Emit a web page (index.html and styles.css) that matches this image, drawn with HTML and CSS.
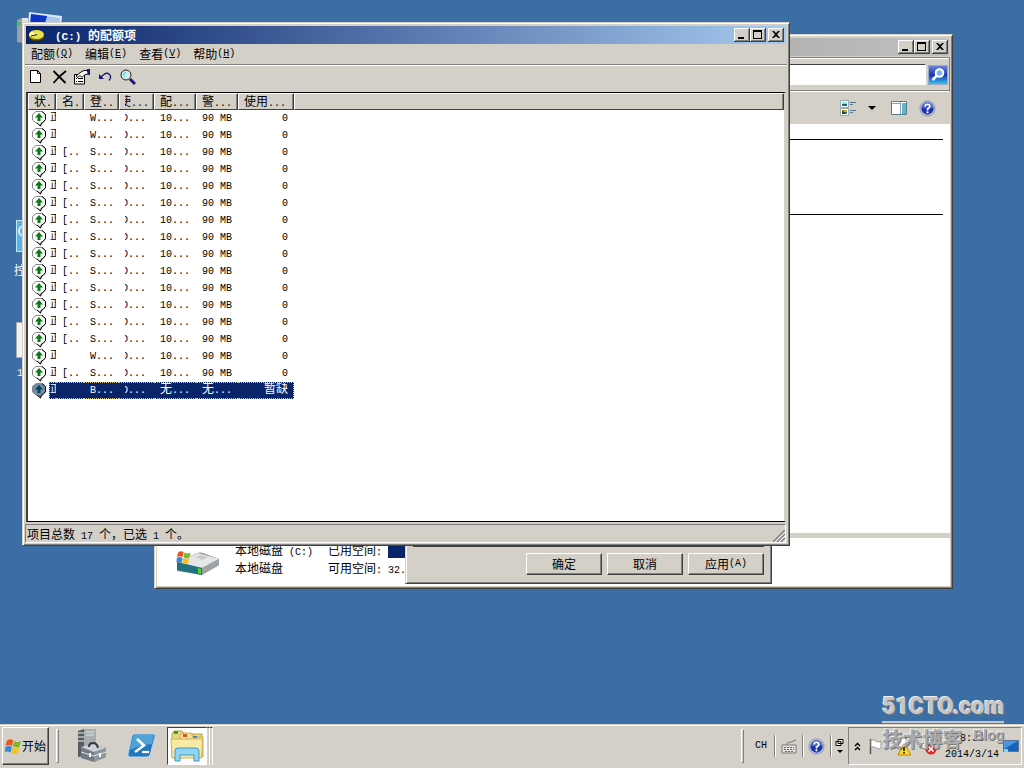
FILE: index.html
```
<!DOCTYPE html>
<html lang="zh-CN">
<head>
<meta charset="utf-8">
<title>(C:) 的配额项</title>
<link rel="stylesheet" href="styles.css">
</head>
<body>
<svg class="defs" aria-hidden="true">
  <symbol id="bubble" viewBox="0 0 16 17">
    <path d="M5 1.500H11L14.500 4.500V9.500L12 12.500L10.500 13L9.500 16L6 13H5L1.500 10V4.500Z" fill="var(--bubble, #fff)" stroke="#888"/>
    <path d="M11 1.500L14.500 4.500V9.500L12 12.500L10.500 13L9.500 16L6 13" fill="none" stroke="#000"/>
    <path d="M8 3L12 7.500H9.500V11H6.500V7.500H4Z" fill="var(--arrow, #0a7a14)"/>
  </symbol>
  <symbol id="min" viewBox="0 0 16 14"><path d="M4 9h6v2H4z"/></symbol>
  <symbol id="max" viewBox="0 0 16 14"><path d="M3 2h9v9H3zM4 4v6h7V4z" fill-rule="evenodd"/></symbol>
  <symbol id="close" viewBox="0 0 16 14"><path d="M4 3h2l2 2 2-2h2L9 6.500 12 10h-2L8 8l-2 2H4l3-3.500z"/></symbol>
  <symbol id="flag" viewBox="0 0 18 18">
    <path d="M2 3Q5 0 8.500 2.500L7.500 8.500Q4 6.500 .5 8.500Z" fill="#e8541c"/>
    <path d="M9.500 3Q13 5.500 17 3L15.500 9Q12 11 8.500 8.700Z" fill="#7cb82f"/>
    <path d="M.3 9.500Q4 7.500 7.300 9.500L6 15.500Q3 13.500 0 15Z" fill="#3587d8"/>
    <path d="M8.300 10Q12 12 15.300 10L13.700 16Q10 18 6.900 16Z" fill="#f7c21a"/>
  </symbol>
  <symbol id="help" viewBox="0 0 18 18">
    <circle cx="9" cy="9" r="8" fill="#c4cae0" stroke="#8790b0"/>
    <circle cx="9" cy="9" r="6.500" fill="#1d35a8"/>
    <path d="M3 8a6 6 0 0 1 12 0Q9 10 3 8Z" fill="#6d8bdc" opacity=".6"/>
    <path d="M6.500 7Q6.500 4.500 9 4.500T11.500 7Q11.500 8 9 9.800V11" fill="none" stroke="#fff" stroke-width="1.800"/>
    <circle cx="9" cy="13" r="1.200" fill="#fff"/>
  </symbol>
</svg>

<main class="desktop">
  <div class="shortcut computer">
    <svg width="48" height="34" viewBox="0 0 48 34"><path d="M1 8l5-2v25l-5-1z" fill="#9aa0a6"/><path d="M6 6h6v26H6z" fill="#e1e3e5"/><path d="M2 10h2v3H2z" fill="#2fbf3a"/><path d="M13 0l33 4-2 22H11z" fill="#dfe9f6"/><path d="M15 2l29 4-2 20H13z" fill="#a9c6ee"/><path d="M15 2l16 2-6 22H13z" fill="#0a35c8"/></svg>
  </div>
  <div class="shortcut panel">
    <svg width="34" height="32" viewBox="0 0 34 32"><rect x="2.500" y=".5" width="31" height="31" fill="#56b4e8" stroke="#bfe6fa"/><circle cx="10" cy="11" r="5" fill="none" stroke="#d8f2ff" stroke-width="2"/></svg>
    <span>控</span>
  </div>
  <div class="shortcut file">
    <svg width="30" height="36" viewBox="0 0 30 36"><path d="M.5.500h29v35H.5z" fill="#f2f2f2" stroke="#aaa"/></svg>
    <span class="en">1</span>
  </div>

  <section class="window explorer" aria-label="计算机">
    <header class="titlebar inactive">
      <div class="controls">
        <button aria-label="最小化"><svg><use href="#min"/></svg></button><button aria-label="最大化"><svg><use href="#max"/></svg></button><button class="x" aria-label="关闭"><svg><use href="#close"/></svg></button>
      </div>
    </header>
    <div class="address">
      <input type="text" aria-label="搜索">
      <button class="search" aria-label="搜索"><svg width="18" height="18" viewBox="0 0 18 18"><circle cx="10.500" cy="7" r="3.800" fill="#7fb2f0" stroke="#fff" stroke-width="2"/><path d="M8 9.500L3.500 14" stroke="#fff" stroke-width="2.500"/></svg></button>
    </div>
    <div class="commands">
      <button aria-label="视图"><svg width="17" height="17" viewBox="0 0 17 17"><path d="M.5.500h8v7h-8zM.5 8.500h8v7h-8z" fill="#fff" stroke="#9aa9ad"/><path d="M2 2h5v2H2z" fill="#9edbe8"/><path d="M2 4h5v2H2z" fill="#216778"/><path d="M2 10h2v2H2zM5 12h2v2H5z" fill="#5a7a20"/><path d="M4 10h3v2H4z" fill="#d8a925"/><path d="M2 12h3v2H2z" fill="#1d3c66"/><path d="M10 2.500h6M10 4.500h3M10 10.500h6M10 12.500h3" stroke="#5c7590"/></svg></button>
      <button class="drop" aria-label="更多选项"><svg width="8" height="4" viewBox="0 0 8 4"><path d="M0 0h8L4 4z"/></svg></button>
      <button class="preview" aria-label="预览窗格"><svg width="16" height="15" viewBox="0 0 16 15"><path d="M.5.500h15v13H.5z" fill="#fff" stroke="#527f91"/><path d="M1 2.500h9M9.500 1v12" stroke="#8aa5b2"/><path d="M11 2h4v11h-4z" fill="#67b4ca"/></svg></button>
      <button aria-label="帮助"><svg width="17" height="17"><use href="#help"/></svg></button>
    </div>
    <div class="files"><hr><hr></div>
    <footer class="details">
      <svg class="drive" width="46" height="28" viewBox="0 0 46 28">
        <path d="M2 12L22 3Q25 2 28 3L44 9V15L27 25L2 21Z" fill="#8c9194"/>
        <path d="M2 12L23 3L44 9L27 18Z" fill="#e5e6e7"/><path d="M2 12L27 18V25L2 20Z" fill="#21727c"/><path d="M27 18L44 9V15L27 25Z" fill="#9fa3a6"/>
        <path d="M23 18l3 1v5l-3-1z" fill="#56d336"/><path d="M20 7l6-2 7 2-6 3z" fill="#c8cacc"/>
        <svg x="1" y="0" width="16" height="15"><use href="#flag"/></svg>
      </svg>
      <dl>
        <dt>本地磁盘<span class="en"> (C:)</span></dt><dd>已用空间<span class="en">: </span><i class="meter"></i></dd>
        <dt>本地磁盘</dt><dd>可用空间<span class="en">: 32.</span></dd>
      </dl>
    </footer>
  </section>

  <section class="window dialog" aria-label="属性">
    <div class="page-edge"></div>
    <div class="actions"><button>确定</button><button>取消</button><button>应用<span class="en">(A)</span></button></div>
  </section>

  <section class="window quota">
    <header class="titlebar">
      <svg class="app" width="17" height="13" viewBox="0 0 17 13"><ellipse cx="8.500" cy="7.500" rx="8" ry="4.500" fill="#6b6412" stroke="#28250a"/><ellipse cx="8.500" cy="5.500" rx="7.500" ry="4.500" fill="#e7df45"/><path d="M8 5.500L1 7Q1 4 4 2.500Z" fill="#fffbb0"/><path d="M9 5.500L3 7" stroke="#28250a"/></svg>
      <h1><span class="en">(C:) </span>的配额项</h1>
      <div class="controls">
        <button aria-label="最小化"><svg><use href="#min"/></svg></button><button aria-label="最大化"><svg><use href="#max"/></svg></button><button class="x" aria-label="关闭"><svg><use href="#close"/></svg></button>
      </div>
    </header>
    <nav class="menubar">
      <button>配额<span class="en">(<u>Q</u>)</span></button><button>编辑<span class="en">(<u>E</u>)</span></button><button>查看<span class="en">(<u>V</u>)</span></button><button>帮助<span class="en">(<u>H</u>)</span></button>
    </nav>
    <div class="toolbar">
      <button aria-label="新建配额项"><svg viewBox="0 0 16 16"><path d="M2.500 1.500h7l3 3v9h-10z" fill="#fff" stroke="#000"/><path d="M9.500 1.500v3h3" fill="none" stroke="#000"/></svg></button>
      <button aria-label="删除"><svg viewBox="0 0 16 16"><path d="M2.500 2L14.500 14M15 2L8.500 7.500L2.500 14" fill="none" stroke="#000" stroke-width="1.800"/></svg></button>
      <button aria-label="属性"><svg viewBox="0 0 16 16"><path d="M.5 5.500h10v9.500H.5z" fill="#fff" stroke="#000"/><path d="M2 9.500h1M4 9.500h5M2 12.500h1M4 12.500h5" stroke="#000"/><path d="M2 7l5-4 3-1.500h4V5l-3 .500-3 3-2-2-2 2z" fill="#fff" stroke="#000"/><path d="M13 0h3v6h-2V3h-1z" fill="#18187c"/></svg></button>
      <button aria-label="撤消"><svg viewBox="0 0 16 16"><path d="M2 5v5h5z" fill="#18187c"/><path d="M4 8L7 5.500Q10 3 12.500 5.500T12 11.500" fill="none" stroke="#18187c" stroke-width="1.300"/></svg></button>
      <button aria-label="查找"><svg viewBox="0 0 16 16"><circle cx="6" cy="6" r="5" fill="#d8ebeb" stroke="#222"/><path d="M3 6l3-3M4 8l1-1" stroke="#50dce0" stroke-width="1.500"/><path d="M10 10l5 5" stroke="#18187c" stroke-width="3"/></svg></button>
    </div>
    <div class="list">
      <table>
        <colgroup><col class="c28"><col class="c28"><col class="c35"><col class="c35"><col class="c42"><col class="c42"><col class="c56"><col></colgroup>
        <thead><tr><th>状<span class="en">.</span></th><th>名<span class="en">.</span></th><th>登<span class="en">..</span></th><th><div class="cut">使<span class="en">...</span></div></th><th>配<span class="en">...</span></th><th>警<span class="en">...</span></th><th class="num">使用<span class="en">...</span></th><th></th></tr></thead>
        <tbody id="rows"></tbody>
      </table>
    </div>
    <footer class="status"><span>项目总数<b class="en"> 17 </b>个，已选<b class="en"> 1 </b>个。</span>
      <svg width="12" height="12" viewBox="0 0 12 12"><path d="M0 12L12 0M4 12L12 4M8 12L12 8" stroke="#808080" stroke-width="1.500"/><path d="M2 12L12 2M6 12L12 6M10 12L12 10" stroke="#fff"/></svg>
    </footer>
  </section>
</main>

<footer class="taskbar">
  <button class="start"><svg width="17" height="17"><use href="#flag"/></svg>开始</button>
  <i class="grip"></i>
  <button class="launch" aria-label="服务器管理器"><svg width="30" height="34" viewBox="0 0 30 34">
    <path d="M1 2l6-2v27l-6 1z" fill="#555b60"/><path d="M7 0h12v27H7z" fill="#a7adb1"/><path d="M1 4h6M1 8h6M1 12h6" stroke="#edf0f2"/><path d="M9 3h8M9 6h8" stroke="#e2e5e7"/>
    <path d="M4 18l12-3 13 4v9l-12 5L4 29z" fill="#737c83"/><path d="M4 18l12-3 13 4-12 4z" fill="#cbd1d5"/><path d="M17 23l12-4v9l-12 5z" fill="#8e979e"/><path d="M4 23l13 4 12-4" fill="none" stroke="#dce1e5"/><path d="M12 18q0-4 4-4t5 5" fill="none" stroke="#33383c" stroke-width="2"/><path d="M12 24h2v4h-2zM22 24h2v4h-2z" fill="#fff"/></svg></button>
  <button class="launch" aria-label="PowerShell"><svg width="30" height="26" viewBox="0 0 30 26"><path d="M7 1h20q2 0 1 3l-5 18q-1 2-3 2H3q-3 0-2-3L5 3q1-2 2-2z" fill="#2378bb" stroke="#b2d6ee"/><path d="M7 2h20l-2 9Q14 12 3 17L6 4z" fill="#69b8e8" opacity=".65"/><path d="M10 6l7 6.500L8 19" fill="none" stroke="#fff" stroke-width="2.500"/><path d="M15 19h7" stroke="#fff" stroke-width="2.200"/></svg></button>
  <button class="launch active" aria-label="Windows 资源管理器"><svg width="34" height="32" viewBox="0 0 34 32"><path d="M2 4l2-3h8l2 3h18v22H2z" fill="#edd77c" stroke="#b79b3d"/><path d="M10 5l2-2h9l2 4h10v20H10z" fill="#f4e391" stroke="#c4a848"/><path d="M1 9h30q2 0 1.500 3l-1 16H2z" fill="#f7eaa5" stroke="#cbb058"/><path d="M4 1h4v3H4z" fill="#37a72e"/><path d="M13 4h4v3h-4z" fill="#d85430"/><path d="M23 6h4v2h-4z" fill="#3e86ce"/><path d="M5 31V21q0-3 3-3h18q3 0 3 3v10h-5v-6H10v6z" fill="#90d3f1" stroke="#3c98c9"/></svg></button>
  <i class="stack"></i><i class="stack"></i>
  <div class="spacer"></div>
  <i class="grip"></i>
  <button class="lang en">CH</button>
  <i class="divider"></i>
  <button class="tray" aria-label="键盘"><svg width="16" height="15" viewBox="0 0 16 15"><path d="M1 6h14v8H1z" fill="#e5e3de" stroke="#777"/><path d="M3 8.500h10M3 10.500h10M4 12.500h8" stroke="#666" stroke-dasharray="2 1"/><path d="M6 6V4l4-1 5-2" fill="none" stroke="#777"/></svg></button>
  <i class="divider"></i>
  <button class="tray" aria-label="帮助"><svg width="17" height="17"><use href="#help"/></svg></button>
  <i class="divider"></i>
  <button class="restore" aria-label="还原语言栏"><svg width="9" height="17" viewBox="0 0 9 17"><path d="M3 1.500h5v4H3zM1 3.500h5v4H1z" fill="#fff" stroke="#000"/><path d="M2 12h6l-3 3z"/></svg></button>
  <div class="notify">
    <button aria-label="显示隐藏的图标"><svg width="7" height="9" viewBox="0 0 7 9"><path d="M1 4l2.500-2.500L6 4M1 8l2.500-2.500L6 8" fill="none" stroke="#000" stroke-width="1.400"/></svg></button>
    <svg width="14" height="17" viewBox="0 0 14 17"><path d="M1.500 1v15" stroke="#555" stroke-width="1.500"/><path d="M2 2q3-1 5 1t5 0v7q-3 2-5 0t-5-1z" fill="#fff" stroke="#999"/></svg>
    <svg width="20" height="20" viewBox="0 0 20 20"><path d="M3 2h12v10H3z" fill="#fff" stroke="#777"/><path d="M13 7l7 12H7z" fill="#ffd824" stroke="#b38a00"/><path d="M13 11v4M13 16v1.500" stroke="#000" stroke-width="1.500"/></svg>
    <svg width="18" height="20" viewBox="0 0 18 20"><path d="M1 8h3l5-5v13l-5-4H1z" fill="#eee" stroke="#777"/><circle cx="12" cy="13" r="5.500" fill="#d82a24"/><path d="M9.500 10.500l5 5M14.500 10.500l-5 5" stroke="#fff" stroke-width="1.700"/></svg>
    <time class="en"><span>8:53</span><span>2014/3/14</span></time>
    <svg width="16" height="13" viewBox="0 0 16 13"><path d="M.5.500h15v11H.5z" fill="#1562b8" stroke="#54749a"/><path d="M1 1h14L1 9z" fill="#4597df"/><path d="M1 9h4v3H1z" fill="#89d2f5"/></svg>
  </div>
</footer>

<div class="watermark"><strong>51CTO.com</strong><div><span>技术博客</span><em>Blog</em></div></div>
<script src="rows.js"></script>
</body>
</html>
```
FILE: styles.css
```
* { box-sizing: border-box; }
body {
  margin: 0; height: 100vh; overflow: hidden; display: flex; flex-direction: column;
  background: #3a6ea5; color: #000;
  font: 12px/16px "Noto Sans CJK SC", sans-serif;
}
button { font: inherit; color: inherit; padding: 0; border: 0; background: none; display: flex; align-items: center; justify-content: center; }
svg { display: block; flex: none; }
.defs { position: absolute; width: 0; height: 0; }
.en { font-family: "Liberation Mono", monospace; font-size: 10px; font-weight: inherit; line-height: 10px; white-space: pre; }

.desktop { flex: 1; position: relative; min-height: 0; }
.shortcut { position: absolute; color: #fff; display: flex; flex-direction: column; gap: 10px; }
.computer { left: 16px; top: 12px; }
.panel { left: 14px; top: 220px; }
.file { left: 16px; top: 322px; gap: 11px; }
.file .en { padding-left: 1px; }

.window {
  position: absolute; display: flex; flex-direction: column; padding: 2px;
  background: #d4d0c8; border: 1px solid; border-color: #d4d0c8 #404040 #404040 #d4d0c8;
  box-shadow: inset 1px 1px #fff, inset -1px -1px #808080;
}
.explorer { left: 154px; top: 34px; right: 71px; bottom: 135px; }
.dialog { left: 405px; top: 60px; right: 252px; bottom: 140px; justify-content: flex-end; }
.quota { left: 22px; top: 22px; right: 234px; bottom: 178px; }

.titlebar { display: flex; align-items: center; height: 18px; margin: 1px; flex: none; padding: 0 2px; background: linear-gradient(90deg, #0a246a, #a6caf0); color: #fff; }
.titlebar.inactive { padding-right: 1px; background: linear-gradient(90deg, #808080, #c0c0c0); }
.titlebar h1 { margin: 0 0 0 10px; font-size: 12px; line-height: 18px; }
.titlebar h1 .en { font-size: 11px; }
.controls { margin-left: auto; display: flex; }
.controls button { width: 16px; height: 14px; color: #000; background: #d4d0c8; box-shadow: inset -1px -1px #404040, inset 1px 1px #fff, inset -2px -2px #808080; }
.controls svg { width: 16px; height: 14px; }
.controls .x { margin-left: 2px; }

.address { display: flex; align-items: center; gap: 2px; height: 35px; flex: none; padding: 0 1px; border: 1px solid; border-color: #808080 #808080 #fff; box-shadow: inset 0 1px #fff, inset 0 -1px #808080; }
.address input { flex: 1; height: 21px; border: 1px solid; border-color: #404040 #fff #fff #404040; background: #fff; }
.search { width: 20px; height: 20px; border: 1px solid #9ba9c8; background: linear-gradient(#6a83dc, #1735b0 50%, #35c4ec); }
.commands { display: flex; align-items: center; justify-content: flex-end; height: 32px; flex: none; padding-right: 14px; }
.drop { margin: 0 15px 0 11px; }
.preview { margin-right: 12px; }
.files { flex: 1; background: #fff; padding: 15px 7px 0 0; }
.files hr { margin: 0 0 74px; border: 0; height: 1px; background: #000; }
.details { display: flex; height: 53px; flex: none; border-top: 5px solid #d4d0c8; background: #fff; padding: 3px 0 0 18px; }
.drive { margin: 9px 14px 0 0; }
dl { margin: 0; display: grid; grid-template-columns: 93px auto; grid-auto-rows: 18px; line-height: 18px; }
dd { margin: 0; white-space: nowrap; }
.meter { display: inline-block; width: 100px; height: 12px; background: #0a246a; vertical-align: middle; }

.page-edge { margin: 0 5px; border-bottom: 1px solid #404040; }
.actions { display: flex; justify-content: flex-end; gap: 5px; padding: 6px 5px; }
.actions button { width: 76px; height: 22px; border: 1px solid; border-color: #fff #404040 #404040 #fff; box-shadow: inset -1px -1px #808080; }

.menubar { display: flex; gap: 12px; height: 20px; flex: none; padding: 0 6px 2px; border-bottom: 1px solid #808080; }
.toolbar { display: flex; align-items: center; gap: 7px; height: 27px; flex: none; border-top: 1px solid #fff; padding: 0 3px 4px; }
.toolbar svg { width: 16px; height: 16px; }
.list { flex: 1; overflow: hidden; background: #fff; border: 2px solid; border-width: 1px 2px; border-color: #000 #d4d0c8 #000 #404040; margin: 0 1px; }
table { width: 100%; table-layout: fixed; border-collapse: separate; border-spacing: 0; }
.c28 { width: 28px; } .c35 { width: 35px; } .c42 { width: 42px; } .c56 { width: 56px; }
th { height: 16px; padding: 0 0 0 5px; font-weight: 400; line-height: 14px; text-align: left; overflow: hidden; white-space: nowrap; background: #d4d0c8; border: 1px solid; border-color: #fff #404040 #404040 #fff; box-shadow: inset -1px 0 #808080; }
th.num { padding: 0 7px 0 0; text-align: right; }
td { height: 17px; padding: 0 0 0 6px; overflow: hidden; white-space: pre; font: 10px/16px "Liberation Mono", "Noto Sans CJK SC", monospace; }
td.num { text-align: right; padding: 0 6px 0 0; }
td:first-child { padding: 0 0 0 3px; }
.state { display: flex; gap: 2px; }
.state svg { width: 16px; height: 17px; }
.state span { width: 7px; height: 17px; padding: 0 1px; overflow: hidden; }
.cut { overflow: hidden; text-indent: -6px; }
td .cut { text-indent: -3px; }
.selected { color: #fff; --bubble: #7388b0; --arrow: #05484a; }
.selected td:not(:first-child), .selected .state span { background: #0a246a; border: 1px dotted #d8c890; border-width: 1px 0; line-height: 14px; }
.selected .state span { border-left-width: 1px; padding: 0 1px 0 0; }
.selected td.num { border-right-width: 1px; padding-right: 5px; }
.selected td:last-child { background: none; border: 0; }
td .zh { font-size: 12px; }

.status { display: flex; justify-content: space-between; align-items: center; height: 19px; flex: none; margin: 2px 1px 0 0; padding: 1px 0 0 1px; border: 1px solid; border-color: #808080 #fff #fff #808080; }
.status b { font-weight: 400; }
.status svg { align-self: flex-end; }

.taskbar { display: flex; align-items: center; height: 44px; flex: none; padding: 3px 2px; background: #d4d0c8; box-shadow: inset 0 1px #d4d0c8, inset 0 2px #fff; }
.start { width: 47px; height: 38px; border: 1px solid; border-color: #fff #404040 #404040 #fff; box-shadow: inset -1px -1px #808080; white-space: nowrap; }
.grip { width: 3px; height: 34px; margin-left: 7px; border: 1px solid; border-color: #fff #808080 #808080 #fff; }
.launch { width: 40px; height: 38px; margin-left: 10px; }
.grip + .launch { margin-left: 13px; }
.active { margin-left: 5px; background: #fff; border: 1px solid; border-color: #404040 #fff #fff #404040; }
.stack { width: 3px; height: 38px; border-right: 1px solid #fff; border-top: 1px solid #404040; }
.spacer { flex: 1; }
.lang { width: 26px; margin-left: 4px; }
.divider { width: 2px; height: 22px; border-left: 1px solid #808080; border-right: 1px solid #fff; }
.tray { width: 26px; }
.restore { width: 16px; }
.notify { display: flex; align-items: center; gap: 8px; height: 38px; padding: 0 2px 0 5px; border: 1px solid; border-color: #808080 #fff #fff #808080; }
time { display: flex; flex-direction: column; align-items: center; gap: 6px; margin: 2px -4px 0 0; }

.watermark { position: absolute; right: 20px; bottom: 13px; color: #c6c6c6; text-shadow: 1px 1px #777, -1px -1px #eee; pointer-events: none; }
.watermark strong { display: block; font: 900 23px/28px Roboto, "Liberation Sans", sans-serif; border-bottom: 2px solid #c6c6c6; box-shadow: 0 1px #777; }
.watermark div { display: flex; justify-content: space-between; color: #aaa; line-height: 32px; }
.watermark span { font-size: 20px; font-weight: 700; }
.watermark em { font: 700 14px/24px "Liberation Sans", sans-serif; }
```
FILE: rows.js
```
const body = document.getElementById('rows');
const logons = 'WWSSSSSSSSSSSSWSB';

for (const logon of logons) {
  const last = logon === 'B';
  const row = document.createElement('tr');
  if (last) row.className = 'selected';
  const name = logon === 'S' ? '[..' : '';
  const zh = text => `<span class="zh">${text}</span>`;
  row.innerHTML =
    '<td><div class="state"><svg><use href="#bubble"/></svg><span>正</span></div></td>' +
    `<td>${name}</td><td>${logon}...</td><td><div class="cut">D...</div></td>` +
    `<td>${last ? zh('无') + '...' : '10...'}</td><td>${last ? zh('无') + '...' : '90 MB'}</td>` +
    `<td class="num">${last ? zh('暂缺') : '0'}</td><td></td>`;
  body.append(row);
}
```
